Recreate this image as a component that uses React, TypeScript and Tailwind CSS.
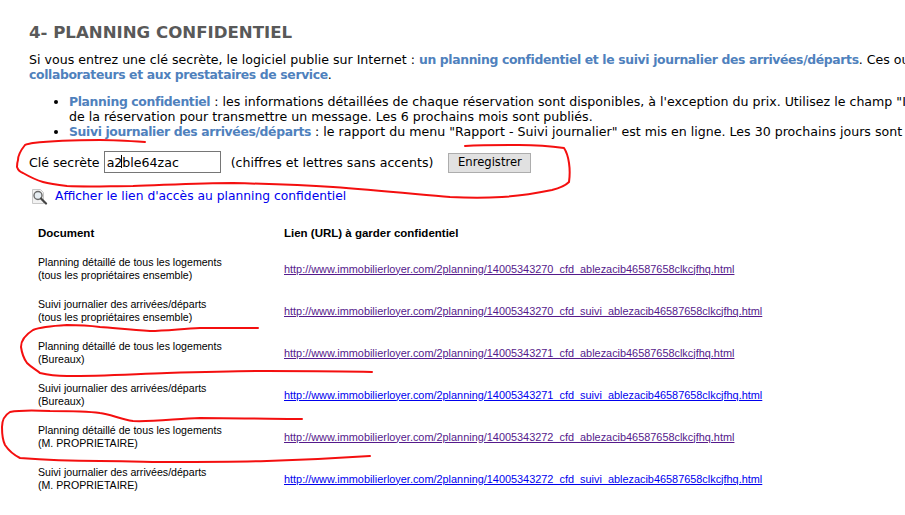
const URL_BASE = 'http://www.immobilierloyer.com/2planning/';

const rows = [
  { title: 'Planning détaillé de tous les logements', owner: '(tous les propriétaires ensemble)', file: '14005343270_cfd_ablezacib46587658clkcjfhq.html', visited: true },
  { title: 'Suivi journalier des arrivées/départs', owner: '(tous les propriétaires ensemble)', file: '14005343270_cfd_suivi_ablezacib46587658clkcjfhq.html', visited: true },
  { title: 'Planning détaillé de tous les logements', owner: '(Bureaux)', file: '14005343271_cfd_ablezacib46587658clkcjfhq.html', visited: true },
  { title: 'Suivi journalier des arrivées/départs', owner: '(Bureaux)', file: '14005343271_cfd_suivi_ablezacib46587658clkcjfhq.html', visited: false },
  { title: 'Planning détaillé de tous les logements', owner: '(M. PROPRIETAIRE)', file: '14005343272_cfd_ablezacib46587658clkcjfhq.html', visited: true },
  { title: 'Suivi journalier des arrivées/départs', owner: '(M. PROPRIETAIRE)', file: '14005343272_cfd_suivi_ablezacib46587658clkcjfhq.html', visited: false },
];

function Highlight({ children }: { children: React.ReactNode }) {
  return <b className="text-[12.4px] font-bold tracking-[-0.36px] text-[#4f81bd]">{children}</b>;
}

function MagnifierIcon() {
  return (
    <svg width="17" height="17" viewBox="0 0 17 17" className="shrink-0">
      <path d="M1.500 1.500h8l3 3v11h-11z" fill="#f2f2f2" stroke="#c8c8c8" />
      <circle cx="7" cy="7.500" r="4" fill="#e6edf2" stroke="#6a6a6a" strokeWidth="1.400" />
      <path d="M10 10.500l5 5" stroke="#444" strokeWidth="2.200" strokeLinecap="round" />
    </svg>
  );
}

// hand-drawn red marks on top of the capture
function RedMarks() {
  return (
    <svg width="905" height="515" viewBox="0 0 905 515" fill="none" stroke="#f40f0f" strokeWidth="2" strokeLinecap="round" strokeLinejoin="round" className="absolute left-0 top-0 pointer-events-none">
      <path d="M145 142C130 141 115 140 100 140C75 140 50 141 33 143C28 144 26 144 25 145C21 150 18 155 18 160C17 163 17 165 17 167C18 170 20 172 23 173C30 177 36 180 43 182C50 184 58 185 67 186C90 187 110 186 133 186C165 185 200 183 233 183C270 184 300 185 333 187C375 190 415 194 450 197C470 198 485 198 502 197C520 196 537 193 552 190C560 188 566 185 569 182C570 175 570 170 569 163C568 156 566 151 564 148C550 146 535 145 519 145C500 145 482 145 465 146" />
      <path d="M258 328C235 328 220 328 200 328C180 329 165 331 150 331C130 330 115 328 100 327C85 325 75 325 67 325C50 326 40 327 33 330C25 335 21 341 21 347C22 354 24 359 27 363C32 368 37 370 40 373C48 375 57 376 67 376C100 376 135 374 167 373C200 372 235 371 267 371C300 371 340 371 372 372" />
      <path d="M302 419C270 419 235 418 200 418C175 419 150 422 133 421C120 419 110 414 100 413C85 411 65 411 50 411C30 410 15 411 10 412C5 415 2 421 2 427C2 435 3 441 5 445C9 451 14 455 20 458C45 460 75 461 100 461C120 461 145 462 167 462C200 462 235 462 267 461C300 460 340 458 370 456" />
    </svg>
  );
}

export default function App() {
  return (
    <div className="relative h-[515px] w-[905px] overflow-hidden bg-white font-['DejaVu_Sans',Verdana,sans-serif] text-[12.6px] leading-[15px] text-black">
      <div className="w-[1200px] pl-[29px] pt-[24px]">
        <h1 className="text-[16.6px] font-bold leading-[18px] text-[#595959]">4- PLANNING CONFIDENTIEL</h1>
        <p className="mt-[10px]">
          Si vous entrez une clé secrète, le logiciel publie sur Internet : <Highlight>un planning confidentiel et le suivi journalier des arrivées/départs</Highlight>. Ces outils sont destinés aux
          <br />
          <Highlight>collaborateurs et aux prestataires de service</Highlight>.
        </p>
        <ul className="mt-[12px] list-disc pl-[40px]">
          <li>
            <Highlight>Planning confidentiel</Highlight> : les informations détaillées de chaque réservation sont disponibles, à l'exception du prix. Utilisez le champ "Informations"
            <br />
            de la réservation pour transmettre un message. Les 6 prochains mois sont publiés.
          </li>
          <li>
            <Highlight>Suivi journalier des arrivées/départs</Highlight> : le rapport du menu "Rapport - Suivi journalier" est mis en ligne. Les 30 prochains jours sont publiés.
          </li>
        </ul>
        <div className="mt-[12px] flex items-center">
          <span>Clé secrète</span>
          <div className="relative ml-[4px] flex h-[22px] w-[117px] items-center border border-[#767676] pl-[2px]">
            a2ble64zac
            <span className="absolute left-[16px] top-[3px] h-[13px] w-px bg-black" />
          </div>
          <span className="ml-[10px]">(chiffres et lettres sans accents)</span>
          <button className="ml-[15px] mt-[2px] h-[20px] w-[83px] border border-[#adadad] bg-[#e1e1e1] text-[11.6px] leading-none">Enregistrer</button>
        </div>
        <div className="mt-[15px] flex items-center gap-[7px] pl-[2px]">
          <MagnifierIcon />
          <a className="text-[12.3px] text-[#0000ee]">Afficher le lien d'accès au planning confidentiel</a>
        </div>
        <table className="mt-[13px] w-[875px] table-fixed border-collapse font-['Liberation_Sans',Arial,sans-serif] text-[10.6px] leading-[13px]">
          <thead>
            <tr className="h-[30px] text-left text-[11.5px]">
              <th className="w-[255px] pl-[9px] font-bold">Document</th>
              <th className="font-bold">Lien (URL) à garder confidentiel</th>
            </tr>
          </thead>
          <tbody>
            {rows.map((row) => (
              <tr key={row.file} className="h-[42px]">
                <td className="pl-[9px]">
                  {row.title}
                  <br />
                  {row.owner}
                </td>
                <td>
                  <a className={row.visited ? 'text-[10.9px] text-[#551a8b] underline' : 'text-[10.9px] text-[#0000ee] underline'}>{URL_BASE + row.file}</a>
                </td>
              </tr>
            ))}
          </tbody>
        </table>
      </div>
      <RedMarks />
    </div>
  );
}
